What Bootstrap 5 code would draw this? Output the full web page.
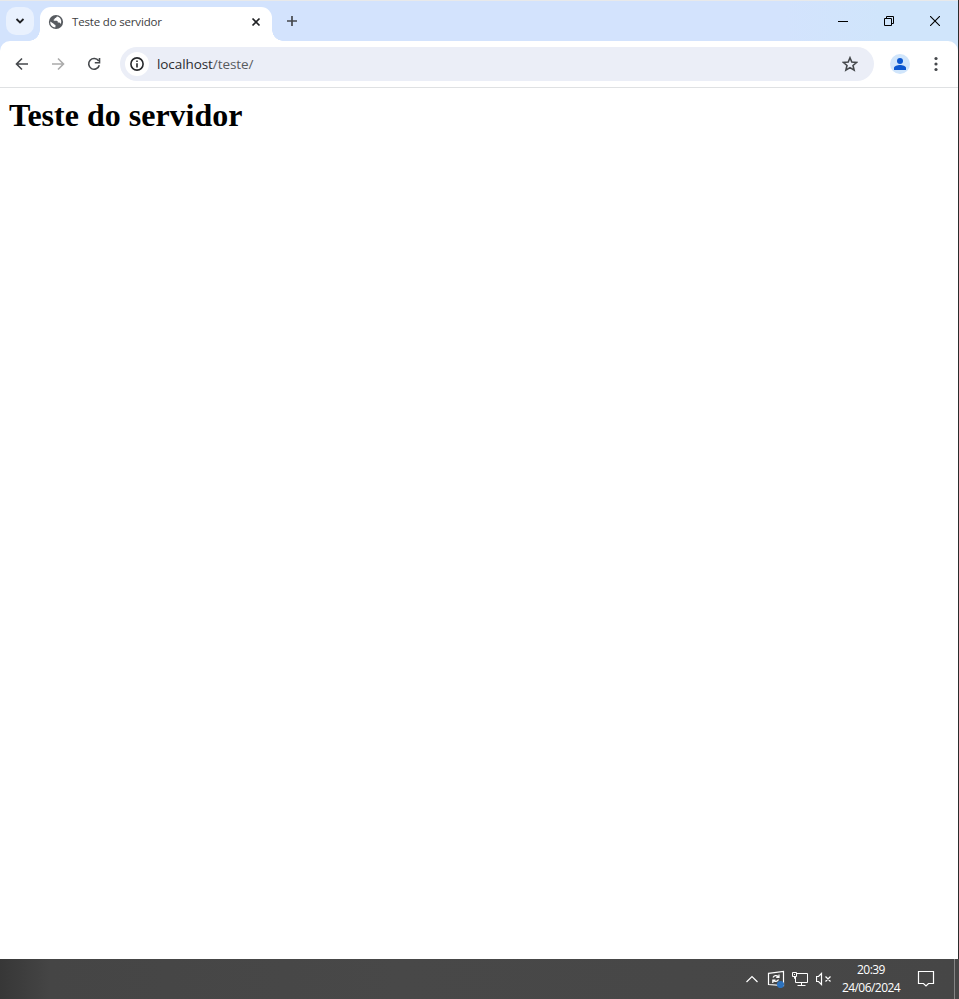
<!DOCTYPE html>
<html lang="pt-BR">
<head>
<meta charset="utf-8">
<meta name="viewport" content="width=device-width, initial-scale=1">
<title>Teste do servidor</title>
<link href="https://cdn.jsdelivr.net/npm/bootstrap@5.3.0/dist/css/bootstrap.min.css" rel="stylesheet">
<style>
body{font-family:"Open Sans","Noto Sans",sans-serif;height:999px;overflow:hidden;background:#fff}
svg{display:block;flex:none}
.browser{height:959px;border-right:1px solid #2b2b2b}
.tabstrip{height:41px;border-top:1px solid #e8e9ea;background:linear-gradient(90deg,#d3e3fd 0,#d3e3fd 82%,#d0e5fb 92%,#d0e5fb)}
.tab-search{width:28px;height:28px;border-radius:10px;margin:6px 6px 6px;background:#e9f1fe}
.tab-item{width:232px;height:34px;margin-top:6px;padding:0 10px 5px 8px;border-radius:11px 11px 0 0;background:#fff;position:relative}
.tab-item::before,.tab-item::after{content:"";position:absolute;bottom:0;width:11px;height:11px}
.tab-item::before{left:-11px;background:radial-gradient(circle at 0 0,transparent 10.5px,#fff 11px)}
.tab-item::after{right:-11px;background:radial-gradient(circle at 100% 0,transparent 10.5px,#fff 11px)}
.tab-title{font-size:11.5px;line-height:16px;color:#3c3d40;margin-left:8px;letter-spacing:-.17px}
.new-tab{margin:14px 0 0 14px}
.win-btn{width:46px;height:40px}
.toolbar{height:47px;border-bottom:1px solid #dfe1e3;background:#fff;border-radius:10px 10px 0 0;position:relative}
.toolbar-wrap{background:linear-gradient(90deg,#d3e3fd 60%,#d0e5fb)}
.tool{width:36px;height:36px}
.omnibox{height:34px;margin-left:8px;padding:0 16px 0 5px;border-radius:17px;background:#ebeef7}
.site-info{width:24px;height:24px;background:#fff}
.url{font-size:13.5px;line-height:20px;margin-left:8px;color:#2b2c30;letter-spacing:-.08px}
.url span{color:#585b5f}
.avatar{width:20px;height:20px;background:#d0e5fb;overflow:hidden}
.page-title{font:bold 32px/37px "Liberation Serif",serif;color:#000;margin:9px 0 0 9px}
.taskbar{height:40px;background:linear-gradient(90deg,#373737 0,#454545 50px,#484848 400px,#464646);color:#fff}
.network{margin-left:-1px}
.clock{width:76px;margin:0 8px 0 1px;font-size:12px;line-height:18px;letter-spacing:-.55px}
.notifications{margin-right:19px}
.show-desktop{width:5px;border-left:1px solid #858585}
</style>
<script src="https://cdn.jsdelivr.net/npm/bootstrap@5.3.0/dist/js/bootstrap.bundle.min.js"></script>
</head>
<body>
<div class="browser d-flex flex-column">
  <div class="tabstrip d-flex align-items-start">
    <div class="tab-search d-flex align-items-center justify-content-center">
      <svg width="10" height="8" viewBox="0 0 10 8" fill="none" stroke="#202124" stroke-width="1.8"><path d="M1.5 2 5 5.5 8.5 2"/></svg>
    </div>
    <div class="tab-item d-flex align-items-center">
      <svg width="16" height="16" viewBox="0 0 16 16"><circle cx="8" cy="8" r="7.1" fill="#575b60"/><path d="M9.2 2.4c-1 .3-.8 1.5-1.8 1.6-1 0-.5 1.3-1.4 1.6-.7.3-.5 1.2.3 1.2h2.4c1 0 1.1 1 1.1 1.8h1.4c.8 0 1 .8 1.4 1.4.8-1 .9-3.1 0-5C11.800 3.600 10.400 2.500 9.200 2.400zM2.300 7.600 6 10.100c.4.300.4.700 1 .7.800 0 .5 1.300.3 2.800C4.500 13.400 2 11.200 2.300 7.600z" fill="#fff"/></svg>
      <span class="tab-title flex-grow-1 text-nowrap">Teste do servidor</span>
      <svg width="12" height="12" viewBox="0 0 12 12" stroke="#202124" stroke-width="1.7"><path d="m2.500 2.500 7 7m0-7-7 7"/></svg>
    </div>
    <svg class="new-tab" width="12" height="12" viewBox="0 0 12 12" stroke="#45484c" stroke-width="1.700"><path d="M6 1v10M1 6h10"/></svg>
    <div class="ms-auto d-flex">
      <div class="win-btn d-flex align-items-center justify-content-center"><svg width="10" height="10" viewBox="0 0 10 10" stroke="#000"><path d="M0 5.500h10"/></svg></div>
      <div class="win-btn d-flex align-items-center justify-content-center"><svg width="10" height="10" viewBox="0 0 10 10" fill="none" stroke="#000"><path d="M.5 2.500h7v7h-7zM2.500 2.500v-2h7v7h-2"/></svg></div>
      <div class="win-btn d-flex align-items-center justify-content-center"><svg width="10" height="10" viewBox="0 0 10 10" stroke="#000" stroke-width="1.100"><path d="m0 0 10 10M10 0 0 10"/></svg></div>
    </div>
  </div>
  <div class="toolbar-wrap">
    <div class="toolbar d-flex align-items-center ps-1">
      <div class="tool d-flex align-items-center justify-content-center"><svg width="14" height="14" viewBox="0 0 14 14" fill="none" stroke="#45484c" stroke-width="1.600"><path d="M13 7H2M7 1.500 1.500 7 7 12.500"/></svg></div>
      <div class="tool d-flex align-items-center justify-content-center"><svg width="14" height="14" viewBox="0 0 14 14" fill="none" stroke="#ababab" stroke-width="1.600"><path d="M1 7h11M7 1.500 12.500 7 7 12.500"/></svg></div>
      <div class="tool d-flex align-items-center justify-content-center"><svg width="14" height="14" viewBox="0 0 14 14" fill="none" stroke="#45484c" stroke-width="1.600"><path d="M11.600 3.900A5.400 5.400 0 1 0 12.300 8.300M12.500 1v4.700H7.800"/></svg></div>
      <div class="omnibox d-flex align-items-center flex-grow-1">
        <div class="site-info rounded-circle d-flex align-items-center justify-content-center"><svg width="14" height="14" viewBox="0 0 14 14"><circle cx="7" cy="7" r="6.100" fill="none" stroke="#26282b" stroke-width="1.600"/><path d="M7 6.200V10.400M7 3.400v1.600" stroke="#26282b" stroke-width="1.600"/></svg></div>
        <span class="url flex-grow-1">localhost<span>/teste/</span></span>
        <svg width="16" height="16" viewBox="0 0 16 16" fill="none" stroke="#45484c" stroke-width="1.600"><path d="m8 1.800 1.800 4.300 4.700.4L11 9.500l1.100 4.600L8 11.600l-4.100 2.500L5 9.500 1.500 6.500l4.700-.4z"/></svg>
      </div>
      <div class="tool d-flex align-items-center justify-content-center ms-2"><div class="avatar rounded-circle"><svg width="20" height="20" viewBox="0 0 20 20" fill="#0b57d0"><circle cx="10" cy="7" r="3"/><path d="M4 16v-2c0-1.800 3.500-3 6-3s6 1.200 6 3v2z"/></svg></div></div>
      <div class="tool d-flex align-items-center justify-content-center me-1"><svg width="4" height="16" viewBox="0 0 4 16" fill="#45484c"><circle cx="2" cy="2.500" r="1.600"/><circle cx="2" cy="8" r="1.600"/><circle cx="2" cy="13.500" r="1.600"/></svg></div>
    </div>
  </div>
  <main class="flex-grow-1 bg-white"><h1 class="page-title">Teste do servidor</h1></main>
</div>
<footer class="taskbar d-flex align-items-center justify-content-end">
  <div class="d-flex align-items-center gap-2">
    <svg width="14" height="16" viewBox="0 0 14 16" fill="none" stroke="#fff" stroke-width="1.200"><path d="m1.500 11 5.500-5.500 5.500 5.500"/></svg>
    <svg width="18" height="18" viewBox="0 0 18 18" fill="none" stroke="#fff" stroke-width="1.200"><path d="M1.500 3.300 16.500 1.500V15.500L1.500 14.500z"/><path d="M6 7.500C7 5.300 9.500 5 11.500 6.800M12 4.500v2.800H9.200M11.500 9.500C10.500 11.500 8 12 6 10.300M5.800 13v-3H8.500"/><circle cx="13.500" cy="14.500" r="3.600" fill="#2d72bd" stroke="none"/></svg>
    <svg class="network" width="16" height="16" viewBox="0 0 16 16" fill="none" stroke="#fff"><path d="M5 2.500h10.500v9H3.500V6M.5 1.500h4v4h-4zM9.500 11.500v3M5.500 14.500h8M2 3.500h1M2.500 5.500v2h1"/></svg>
    <svg width="16" height="16" viewBox="0 0 16 16" fill="none" stroke="#fff"><path d="M.5 5.500h2L5.500 2.500v11L2.500 10.500h-2zM9.500 5.500l5 5m0-5-5 5" stroke-width="1.200"/></svg>
  </div>
  <div class="clock text-center"><div>20:39</div><div>24/06/2024</div></div>
  <svg class="notifications" width="18" height="18" viewBox="0 0 18 18" fill="none" stroke="#fff" stroke-width="1.200"><path d="M1.500 1.500h15v12H11.500L9 16l-2.500-2.500h-5z"/></svg>
  <div class="show-desktop align-self-stretch"></div>
</footer>
</body>
</html>
